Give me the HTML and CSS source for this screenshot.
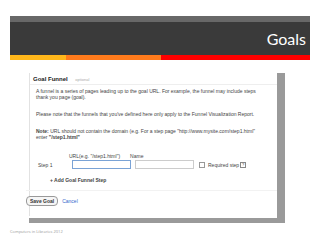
FILE: index.html
```html
<!DOCTYPE html>
<html lang="en">
  <head>
    <meta charset="UTF-8" />
    <title>Goals</title>
    <link rel="stylesheet" href="styles.css">
  </head>
  <body>
    <div class="slide">
      <div class="banner">
        <h1>Goals</h1>
      </div>
      <div class="stripe">
        <span class="yellow"></span>
        <span class="orange"></span>
        <span class="red"></span>
      </div>

      <div class="shot">
        <div class="panel">
          <div class="panel-head">
            <b>Goal Funnel</b> <span class="muted">optional</span>
          </div>
          <p class="intro">A funnel is a series of pages leading up to the goal URL. For example, the funnel may include steps<br>thank you page (goal).</p>
          <p class="note">Please note that the funnels that you've defined here only apply to the Funnel Visualization Report.</p>
          <p class="note"><b>Note:</b> URL should not contain the domain (e.g. For a step page "http://www.mysite.com/step1.html"<br>enter <b>"/step1.html"</b></p>

          <div class="step-labels">
            <span class="url-label">URL(e.g. "/step1.html")</span>
            <span>Name</span>
          </div>
          <div class="step-row">
            <span class="step-name">Step 1</span>
            <span class="field active"></span>
            <span class="field"></span>
            <span class="check"></span>
            <span>Required step</span>
            <span class="help">?</span>
          </div>
          <div class="add-step">+ Add Goal Funnel Step</div>

          <div class="actions">
            <span class="save">Save Goal</span>
            <span class="cancel">Cancel</span>
          </div>
        </div>
      </div>

      <div class="footer">Computers in Libraries 2012</div>
    </div>
  </body>
</html>
```

FILE: styles.css
```css
body {
  margin: 0;
  background: white;
  font-family: "Liberation Sans", Arial, sans-serif;
}

.slide {
  width: 320px;
  height: 240px;
  padding-top: 16px;
  box-sizing: border-box;
}

.banner {
  margin: 0 10px;
  height: 33px;
  border-top: 6px solid #686868;
  background: #3a3a3a;
  display: flex;
  justify-content: flex-end;
  align-items: center;
}

.banner h1 {
  margin: 0 4px 0 0;
  color: white;
  font-family: Lato, "Open Sans", sans-serif;
  font-weight: normal;
  font-size: 16px;
}

.stripe {
  margin: 0 10px;
  height: 5px;
  display: flex;
}

.yellow {
  width: 56px;
  background: #ffb71b;
}

.orange {
  width: 95px;
  background: #ff7b1c;
}

.red {
  flex: 1;
  background: #ff0000;
}

.shot {
  margin: 13px 0 0 29px;
  width: 256px;
  height: 150px;
  box-sizing: border-box;
  border-right: 8px solid #9a9a9a;
  border-bottom: 5px solid #9a9a9a;
}

.panel {
  margin-top: 2px;
  height: 143px;
  border-left: 1px solid #e2e2e2;
  font-size: 5px;
  color: #444;
}

.panel-head {
  padding: 3px 0 2px 3px;
  border-bottom: 1px solid #eee;
  font-size: 6px;
  color: #222;
}

.muted {
  margin-left: 6px;
  color: #aaa;
  font-size: 4px;
}

.panel p {
  margin: 0 0 0 6px;
  line-height: 6px;
}

.intro {
  padding-top: 3px;
}

.note {
  padding-top: 11px;
}

.step-labels {
  display: flex;
  gap: 10px;
  margin: 13px 0 0 39px;
  line-height: 6px;
}

.step-row {
  display: flex;
  align-items: center;
  gap: 3px;
  margin-top: 1px;
  line-height: 6px;
}

.step-name {
  width: 31px;
  margin-left: 8px;
}

.field {
  width: 59px;
  height: 9px;
  border: 1px solid #ccc;
  box-sizing: border-box;
}

.field.active {
  border-color: #7aa3d6;
  margin-right: 1px;
}

.check {
  width: 4px;
  height: 4px;
  border: 1px solid #999;
  margin-left: 2px;
}

.help {
  width: 4px;
  height: 4px;
  border: 1px solid #888;
  font-size: 4px;
  line-height: 4px;
  text-align: center;
  margin-left: -2px;
}

.add-step {
  margin: 8px 0 0 20px;
  font-weight: bold;
  line-height: 6px;
}

.actions {
  margin-top: 7px;
  padding-top: 5px;
  border-top: 1px solid #f2f2f2;
  display: flex;
  align-items: center;
  gap: 4px;
  margin-left: -4px;
}

.save {
  padding: 1px 3px;
  border: 1px solid #999;
  border-radius: 4px;
  background: #f6f6f6;
  font-weight: bold;
  color: #333;
}

.cancel {
  color: #3366cc;
}

.footer {
  margin: 6px 0 0 10px;
  font-family: "Open Sans", sans-serif;
  font-size: 4px;
  color: #9a9a9a;
}
```
